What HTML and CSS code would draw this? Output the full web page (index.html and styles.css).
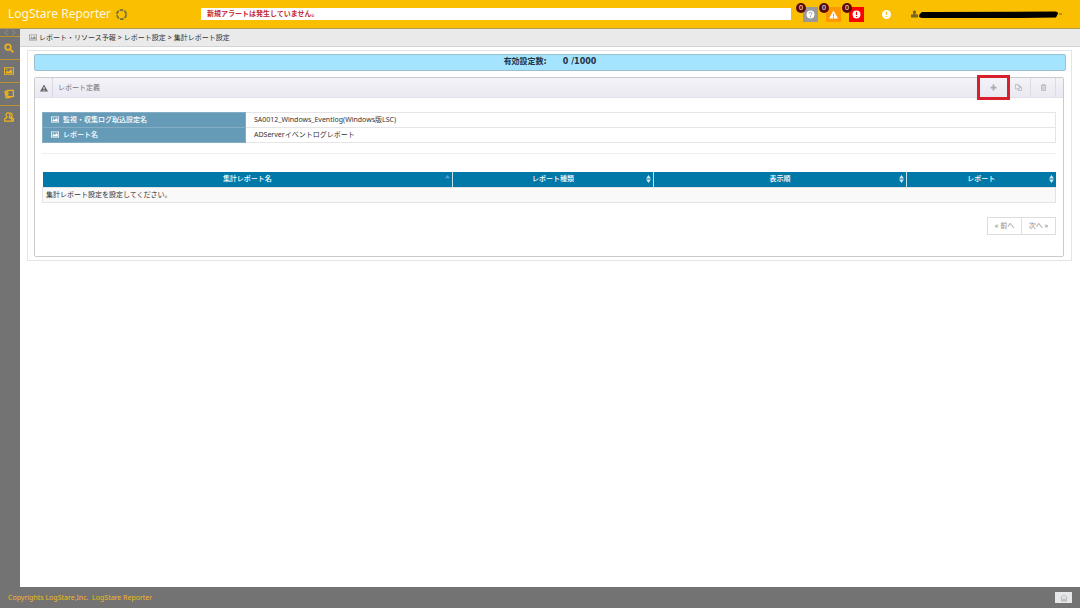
FILE: index.html
```html
<!DOCTYPE html>
<html lang="ja">
<head>
<meta charset="utf-8">
<meta name="viewport" content="width=device-width, initial-scale=1">
<title>LogStare Reporter</title>
<link rel="stylesheet" href="styles.css">
</head>
<body>
<svg class="defs" aria-hidden="true">
  <symbol id="picture" viewBox="0 0 16 14"><path fill="currentColor" fill-rule="evenodd" d="M0 1h16v12H0zM1.500 2.500v9h13v-9zM3 10.500V8l2-2 2 2 4-4 2.500 3v3.500zM4.500 3.500a1 1 0 1 1 0 2 1 1 0 0 1 0-2z"/></symbol>
  <symbol id="warning" viewBox="0 0 16 16"><path fill="currentColor" fill-rule="evenodd" d="M8 1l8 14H0zM7 6v5h2V6zM7 12v2h2v-2z"/></symbol>
</svg>
<header class="topbar">
  <a class="brand" href="#">LogStare Reporter
    <svg class="brand-mark" viewBox="0 0 24 24" aria-hidden="true"><circle cx="12" cy="12" r="8.500" fill="none" stroke="#7d7334" stroke-width="3.500" stroke-dasharray="6.900 2"/></svg>
  </a>
  <p class="alert-line">新規アラートは発生していません。</p>
  <div class="alerts">
    <button class="alert-button unknown" aria-label="不明"><svg viewBox="0 0 16 16"><circle cx="8" cy="8" r="7" fill="#fff"/><path d="M5.500 6.500a2.500 2.500 0 1 1 3.500 2.200L8 10" fill="none" stroke="#999" stroke-width="1.600"/><path d="M7 11h2v2H7z" fill="#999"/></svg><span class="count">0</span></button>
    <button class="alert-button caution" aria-label="警告"><svg viewBox="0 0 16 16"><use href="#warning"/></svg><span class="count">0</span></button>
    <button class="alert-button critical" aria-label="重大"><svg viewBox="0 0 16 16"><circle cx="8" cy="8" r="7" fill="#fff"/><path d="M7 3h2v6H7zM7 10.500h2v2H7z" fill="#f00"/></svg><span class="count">0</span></button>
  </div>
  <button class="notice" aria-label="お知らせ"><svg viewBox="0 0 16 16"><circle cx="8" cy="8" r="8" fill="#fff"/><path d="M7 3h2v6H7zM7 10.500h2v2H7z" fill="#f9bf00"/></svg></button>
  <button class="account" aria-label="アカウント">
    <svg class="account-icon" viewBox="0 0 16 16"><path fill="#7a6528" d="M8 0a4 4 0 0 1 3 6.500l-1 2 6 .5v7H0V9l6-.5-1-2A4 4 0 0 1 8 0z"/></svg>
    <svg class="account-name" viewBox="0 0 144 10"><path d="M3 3h12l121-.5q3 0 3 2l-2 4-37 .5H5Q0 9 0 7t3-4z"/><path d="M140 5h3" stroke="#7a6528"/></svg>
  </button>
</header>
<div class="workspace">
  <nav class="sidebar" aria-label="メニュー">
    <button class="side-toggle" aria-label="開閉"><svg viewBox="0 0 14 6"><path d="M4 0L1 3l3 3M10 0l3 3-3 3" fill="none" stroke="#a39a80"/></svg></button>
    <a class="side-link" href="#" aria-label="検索"><svg viewBox="0 0 16 16"><path d="M6.500 2a4.500 4.500 0 1 1 0 9 4.500 4.500 0 0 1 0-9zM10 10l5 5" fill="none" stroke="currentColor" stroke-width="2.800"/></svg></a>
    <a class="side-link" href="#" aria-label="レポート"><svg viewBox="0 0 16 14"><use href="#picture"/></svg></a>
    <a class="side-link" href="#" aria-label="文書"><svg viewBox="0 0 16 16"><path d="M6 2h9v10H6zM5 3L1.500 4l2 10 7-.5" fill="none" stroke="currentColor" stroke-width="2"/><path d="M3 5l2-1v9H4z" fill="currentColor"/></svg></a>
    <a class="side-link" href="#" aria-label="ユーザー"><svg viewBox="0 0 16 16"><path d="M6.500 1.500a3 3 0 0 1 2 5.500v2l4 2v3.500H1V11l3.500-2V7a3 3 0 0 1 2-5.500zM9 2q4-1 4 3 0 2-1.500 3l3.500 3v3.500h-3" fill="none" stroke="currentColor" stroke-width="1.900"/></svg></a>
  </nav>
  <main class="main">
    <nav class="breadcrumb" aria-label="パンくず"><svg class="crumb-icon" viewBox="0 0 16 14"><use href="#picture"/></svg><a href="#">レポート・リソース予報</a><span>&gt;</span><a href="#">レポート設定</a><span>&gt;</span><a href="#">集計レポート設定</a></nav>
    <section class="content">
      <div class="quota"><span>有効設定数:</span><span>0 /1000</span></div>
      <section class="panel">
        <header class="panel-head">
          <span class="panel-icon"><svg viewBox="0 0 16 16"><use href="#warning"/></svg></span>
          <h1 class="panel-title">レポート定義</h1>
          <div class="tools">
            <button class="tool highlighted" aria-label="追加"><svg viewBox="0 0 12 12"><path d="M6 1v10M1 6h10" stroke="currentColor" stroke-width="3"/></svg></button>
            <button class="tool" aria-label="複製"><svg viewBox="0 0 16 16"><path d="M1 1h6l3 3v7H1zM7 1v3h3M10 5h2l3 3v7H7v-4M12 5v3h3" fill="none" stroke="currentColor" stroke-width="1.500"/></svg></button>
            <button class="tool" aria-label="削除"><svg viewBox="0 0 16 16"><path d="M2 3.500h12M6 3V1h4v2M3.500 4v11h9V4M6.500 6v7M9.500 6v7" fill="none" stroke="currentColor" stroke-width="1.600"/></svg></button>
          </div>
        </header>
        <div class="panel-body">
          <table class="summary">
            <tbody>
              <tr><th scope="row"><svg viewBox="0 0 16 14"><use href="#picture"/></svg>監視・収集ログ取込設定名</th><td>SA0012_Windows_Eventlog(Windows版LSC)</td></tr>
              <tr><th scope="row"><svg viewBox="0 0 16 14"><use href="#picture"/></svg>レポート名</th><td>ADServerイベントログレポート</td></tr>
            </tbody>
          </table>
          <hr class="divider">
          <table class="reports">
            <colgroup><col class="col-name"><col class="col-type"><col class="col-order"><col class="col-report"></colgroup>
            <thead>
              <tr>
                <th scope="col"><div class="heading">集計レポート名<svg class="sort sorted" viewBox="0 0 6 10"><path d="M0 4l3-4 3 4z"/></svg></div></th>
                <th scope="col"><div class="heading">レポート種類<svg class="sort" viewBox="0 0 6 10"><path d="M0 4.500l3-4.500 3 4.500zM0 5.500h6l-3 4.500z"/></svg></div></th>
                <th scope="col"><div class="heading">表示順<svg class="sort" viewBox="0 0 6 10"><path d="M0 4.500l3-4.500 3 4.500zM0 5.500h6l-3 4.500z"/></svg></div></th>
                <th scope="col"><div class="heading">レポート<svg class="sort" viewBox="0 0 6 10"><path d="M0 4.500l3-4.500 3 4.500zM0 5.500h6l-3 4.500z"/></svg></div></th>
              </tr>
            </thead>
            <tbody><tr><td colspan="4">集計レポート設定を設定してください。</td></tr></tbody>
          </table>
          <nav class="pager" aria-label="ページ"><button>« 前へ</button><button>次へ »</button></nav>
        </div>
      </section>
    </section>
  </main>
</div>
<footer class="footer">
  <p>Copyrights LogStare,Inc.&nbsp; LogStare Reporter</p>
  <button class="home" aria-label="ホーム"><svg viewBox="0 0 16 16"><path d="M1 8l7-6 7 6M3 7v7h10V7M6 14v-4h4v4" fill="none" stroke="currentColor" stroke-width="1.500"/></svg></button>
</footer>
</body>
</html>
```
FILE: styles.css
```css
* { box-sizing: border-box; }

body {
  margin: 0;
  min-height: 100vh;
  display: flex;
  flex-direction: column;
  background: #fff;
  color: #333;
  font: 7px/10px "Noto Sans", "Noto Sans CJK JP", sans-serif;
}

button {
  margin: 0;
  padding: 0;
  border: 0;
  background: none;
  color: inherit;
  font: inherit;
}

a { color: inherit; text-decoration: none; }
p, h1 { margin: 0; }
svg { display: block; flex: none; }
table { width: 100%; border-collapse: collapse; table-layout: fixed; }
.defs { position: absolute; width: 0; height: 0; }

.topbar {
  display: flex;
  align-items: center;
  height: 29px;
  padding: 0 17px 0 8px;
  background: #f9bf00;
  border-bottom: 1px solid #b39b55;
}

.brand {
  display: flex;
  align-items: center;
  gap: 4px;
  width: 193px;
  color: #fff8e0;
  font: 12px/16px "Noto Sans", sans-serif;
}
.brand-mark { width: 13px; height: 13px; }

.alert-line {
  flex: 1;
  padding: 1px 6px;
  background: #fff;
  color: #c4282d;
  font-weight: 700;
}

.alerts { display: flex; gap: 8px; margin-left: 12px; }
.alert-button {
  position: relative;
  display: grid;
  place-items: center;
  width: 15px;
  height: 15px;
  color: #fff;
}
.alert-button svg { width: 9px; height: 9px; }
.unknown { background: #999; }
.caution { background: #ff9800; }
.critical { background: #f00; }
.count {
  position: absolute;
  top: -4px;
  left: -7px;
  width: 10px;
  border-radius: 5px;
  background: #5c0a08;
  text-align: center;
}

.notice { margin: 0 20px 0 18px; }
.notice svg { width: 9px; height: 9px; }
.account { display: flex; align-items: center; gap: 1px; }
.account-icon { width: 7px; height: 8px; }
.account-name { width: 144px; height: 10px; }

.workspace { flex: 1; display: flex; }
.sidebar { width: 20px; background: #737373; color: #edb21c; }
.side-toggle {
  display: grid;
  place-items: center;
  width: 100%;
  height: 7px;
}
.side-toggle svg { width: 12px; height: 5px; }
.side-link {
  display: grid;
  place-items: center;
  height: 23px;
  padding-right: 3px;
  border-top: 1px solid #b8932e;
}
.side-link svg { width: 10px; height: 10px; }

.main { flex: 1; min-width: 0; }
.breadcrumb {
  display: flex;
  align-items: center;
  gap: 2px;
  height: 18px;
  padding: 0 9px;
  background: #eaeaea;
  border-bottom: 1px solid #d5d5d5;
}
.crumb-icon { width: 8px; height: 7px; color: #999; }

.content {
  margin: 3px 8px 0 7px;
  padding: 3px 5px 3px 6px;
  border: 1px solid #e4e4e4;
}
.quota {
  display: flex;
  justify-content: center;
  gap: 16px;
  margin-bottom: 6px;
  padding: 1px 0 2px;
  border: 1px solid #9cbfce;
  border-radius: 2px;
  background: #a5e4ff;
  color: #234;
  font: 700 8px/12px "DejaVu Sans", "Noto Sans CJK JP", sans-serif;
}

.panel {
  margin-right: 2px;
  border: 1px solid #cbcbcb;
  border-radius: 2px;
}
.panel-head {
  display: flex;
  height: 20px;
  padding-right: 7px;
  border-bottom: 1px solid #e2e0e8;
  background: linear-gradient(#f4f3f8, #eae8f1);
  color: #777;
}
.panel-icon {
  display: grid;
  place-items: center;
  width: 18px;
  border-right: 1px solid #d9d7df;
}
.panel-icon svg { width: 8px; height: 8px; color: #666; }
.panel-title {
  flex: 1;
  padding-left: 5px;
  font-size: 7px;
  font-weight: 400;
  line-height: 19px;
}
.tools { display: flex; }
.tool {
  display: grid;
  place-items: center;
  width: 25px;
  border-right: 1px solid #dddbe2;
  color: #aaa;
}
.tool svg { width: 7px; height: 7px; }
.highlighted {
  z-index: 1;
  width: 33px;
  margin: -3px -4px -3px 0;
  border: 3px solid #d8202c;
}

.panel-body { padding: 14px 7px 21px; }
.summary th {
  width: 203px;
  padding: 2px 8px;
  border: 1px solid #83adc4;
  background: #669bb8;
  color: #fff;
  font-weight: 500;
  text-align: left;
}
.summary th svg {
  display: inline-block;
  width: 8px;
  height: 7px;
  margin-right: 4px;
  vertical-align: -1px;
}
.summary td { padding: 2px 8px; border: 1px solid #e5e5e5; }
.divider {
  margin: 10px 0 18px;
  border: 0;
  border-top: 1px solid #eee;
}

.col-name { width: 40.500%; }
.col-type { width: 19.800%; }
.col-order { width: 25%; }
.reports th {
  padding: 2px 2px 3px;
  border-right: 1px solid #c9e1eb;
  background: #0078a8;
  color: #fff;
  font-weight: 500;
}
.reports th:last-child { border-right: 0; }
.heading {
  display: grid;
  grid-template-columns: 1fr auto 1fr;
  align-items: center;
}
.heading::before { content: ""; }
.sort { justify-self: end; width: 5px; height: 8px; fill: #d5e9f1; }
.sorted { fill: #5b9ed0; }
.reports td {
  padding: 2px 3px;
  border: 1px solid #e3e3e3;
  background: #f9f9f9;
}

.pager { display: flex; justify-content: flex-end; margin-top: 14px; }
.pager button {
  width: 35px;
  padding: 3px 0;
  border: 1px solid #ddd;
  color: #888;
}
.pager button + button { margin-left: -1px; }

.footer {
  display: flex;
  align-items: center;
  justify-content: space-between;
  height: 21px;
  padding: 0 8px;
  background: #737373;
  color: #f0b81c;
}
.home {
  display: grid;
  place-items: center;
  width: 17px;
  height: 11px;
  background: #e6e7e8;
  color: #aaa;
}
.home svg { width: 8px; height: 8px; }
```
